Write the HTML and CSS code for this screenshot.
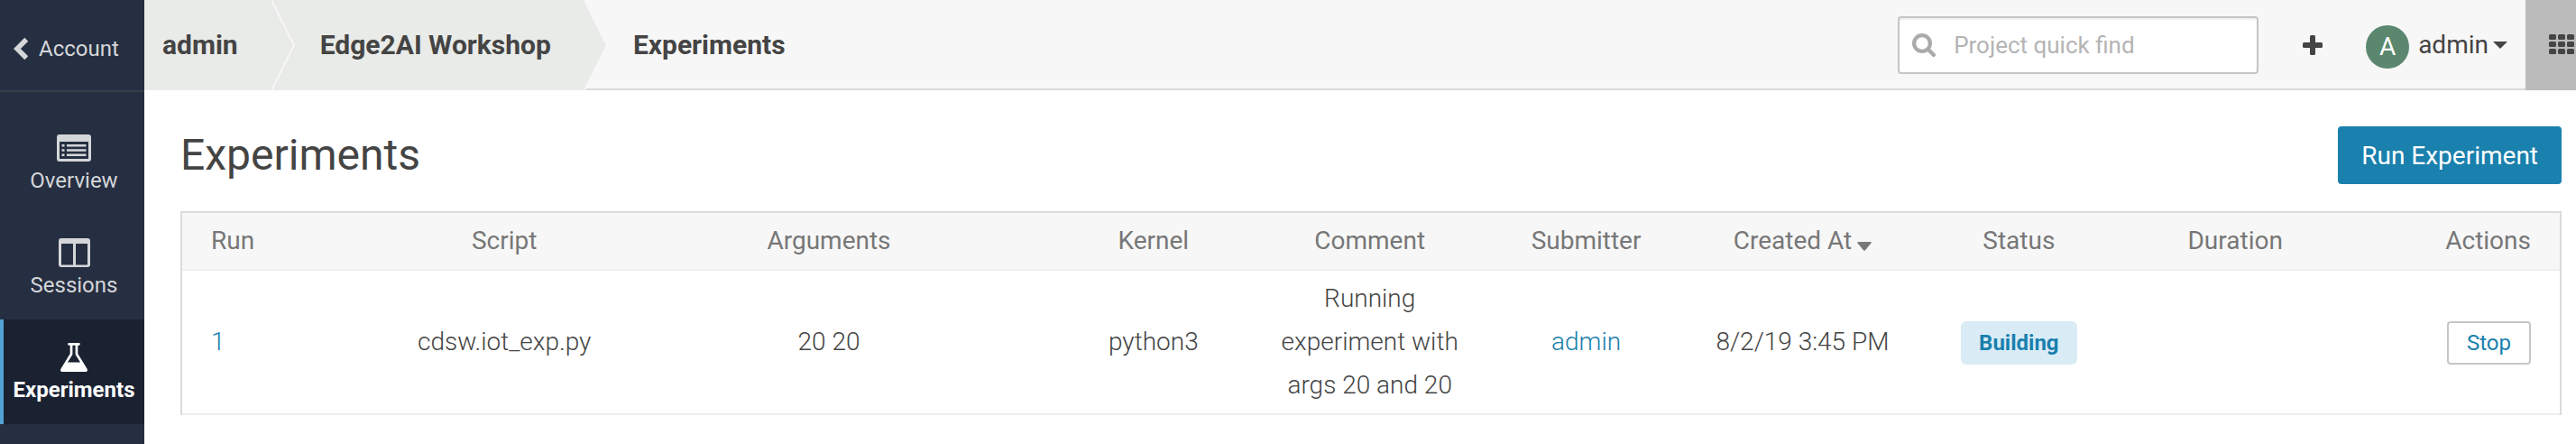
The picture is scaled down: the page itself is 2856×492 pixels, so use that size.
FILE: index.html
```html
<!DOCTYPE html>
<html lang="en">
<head>
<meta charset="utf-8">
<title>Experiments</title>
<link rel="stylesheet" href="styles.css">
</head>
<body>
<div class="app">
  <nav class="sidebar" aria-label="Project">
    <a class="account" href="#">
      <svg width="16" height="26" viewBox="0 0 16 26"><path d="M14.200 2.800 4 13l10.200 10.200" fill="none" stroke="currentColor" stroke-width="5.500"/></svg>
      <span>Account</span>
    </a>
    <div class="nav-list">
      <a class="nav-item" href="#">
        <svg width="38" height="34" viewBox="0 0 38 34"><path fill="currentColor" fill-rule="evenodd" d="M3 2h32a3 3 0 0 1 3 3v24a3 3 0 0 1-3 3H3a3 3 0 0 1-3-3V5a3 3 0 0 1 3-3ZM3 10v18.500a.5.5 0 0 0 .5.5h31a.5.5 0 0 0 .5-.5V10ZM5.500 13h3v2.500h-3ZM5.500 18.200h3v2.500h-3ZM5.500 23.400h3v2.500h-3ZM11 13h21.500v2.500H11ZM11 18.200h21.500v2.500H11ZM11 23.400h21.500v2.500H11Z"/></svg>
        <span>Overview</span>
      </a>
      <a class="nav-item" href="#">
        <svg width="35" height="34" viewBox="0 0 35 34"><path fill="currentColor" fill-rule="evenodd" d="M3 1h29a3 3 0 0 1 3 3v26a3 3 0 0 1-3 3H3a3 3 0 0 1-3-3V4a3 3 0 0 1 3-3ZM3 7v23.500h13V7ZM19 7v23.500h13V7Z"/></svg>
        <span>Sessions</span>
      </a>
      <a class="nav-item active" href="#" aria-current="page">
        <svg width="30" height="34" viewBox="0 0 30 34"><path fill="currentColor" fill-rule="evenodd" d="M9.500 1h11a1.300 1.300 0 0 1 0 2.700h-1.200v9.300l10 16.200c1.300 2.200.6 3.800-1.800 3.800h-25c-2.400 0-3.100-1.600-1.800-3.800l10-16.200V3.700H9.500a1.300 1.300 0 0 1 0-2.700ZM13.400 3.700v10L8 22.500h14l-5.400-8.800v-10Z"/></svg>
        <span>Experiments</span>
      </a>
    </div>
  </nav>
  <div class="page">
    <header class="topbar">
      <nav class="crumbs" aria-label="Breadcrumb">
        <a class="crumb" href="#">admin<svg class="arrow" width="28" height="100" viewBox="0 0 28 100"><path class="fill" d="M0 0 25 50 0 100Z"/><path class="edge" d="M0 0 25 50 0 100"/></svg></a>
        <a class="crumb" href="#">Edge2AI Workshop<svg class="arrow" width="28" height="100" viewBox="0 0 28 100"><path class="fill" d="M0 0 25 50 0 100Z"/><path class="edge" d="M0 0 25 50 0 100"/></svg></a>
        <span class="crumb current">Experiments</span>
      </nav>
      <div class="tools">
        <label class="search">
          <svg width="26" height="26" viewBox="0 0 26 26" fill="none" stroke="currentColor"><circle cx="11" cy="11" r="8.900" stroke-width="4.200"/><path d="m17.500 17.500 6.300 6.300" stroke-width="4.400" stroke-linecap="round"/></svg>
          <input type="text" placeholder="Project quick find" aria-label="Project quick find">
        </label>
        <button class="icon-button" type="button" aria-label="New">
          <svg width="22" height="22" viewBox="0 0 22 22" fill="currentColor"><rect x="8" width="6" height="22" rx="1.500"/><rect y="8" width="22" height="6" rx="1.500"/></svg>
        </button>
        <button class="user" type="button">
          <span class="avatar">A</span>
          <span class="user-name">admin</span>
          <svg class="caret" width="16" height="8" viewBox="0 0 16 8"><path d="M0 0h16L8 8Z" fill="currentColor"/></svg>
        </button>
        <button class="apps" type="button" aria-label="Applications">
          <svg width="28" height="22" viewBox="0 0 28 22" fill="currentColor"><rect width="8" height="6" rx="1.500"/><rect x="10" width="8" height="6" rx="1.500"/><rect x="20" width="8" height="6" rx="1.500"/><rect y="8" width="8" height="6" rx="1.500"/><rect x="10" y="8" width="8" height="6" rx="1.500"/><rect x="20" y="8" width="8" height="6" rx="1.500"/><rect y="16" width="8" height="6" rx="1.500"/><rect x="10" y="16" width="8" height="6" rx="1.500"/><rect x="20" y="16" width="8" height="6" rx="1.500"/></svg>
        </button>
      </div>
    </header>
    <main class="content">
      <div class="heading">
        <h1>Experiments</h1>
        <button class="primary" type="button">Run Experiment</button>
      </div>
      <table class="runs">
        <colgroup>
          <col><col class="col"><col class="col-wide"><col class="col"><col class="col"><col class="col"><col class="col"><col class="col"><col class="col"><col class="col">
        </colgroup>
        <thead>
          <tr>
            <th scope="col">Run</th>
            <th scope="col">Script</th>
            <th scope="col">Arguments</th>
            <th scope="col">Kernel</th>
            <th scope="col">Comment</th>
            <th scope="col">Submitter</th>
            <th scope="col" aria-sort="descending">Created At <svg class="sort" width="16" height="10" viewBox="0 0 16 10"><path d="M1 0h14q1 .5.400 1.500L9 9.300q-1 1-2 0L.6 1.500Q0 .5 1 0Z" fill="currentColor"/></svg></th>
            <th scope="col">Status</th>
            <th scope="col">Duration</th>
            <th scope="col">Actions</th>
          </tr>
        </thead>
        <tbody>
          <tr>
            <td><a href="#">1</a></td>
            <td>cdsw.iot_exp.py</td>
            <td>20 20</td>
            <td>python3</td>
            <td>Running experiment with args 20 and 20</td>
            <td><a href="#">admin</a></td>
            <td>8/2/19 3:45 PM</td>
            <td><span class="badge">Building</span></td>
            <td></td>
            <td><button class="stop" type="button">Stop</button></td>
          </tr>
        </tbody>
      </table>
    </main>
  </div>
</div>
</body>
</html>
```

FILE: styles.css
```css
* {
  box-sizing: border-box;
}

body {
  margin: 0;
  background: #fff;
  color: #444;
  font: 400 28px/48px Roboto, sans-serif;
}

a {
  color: #1a80ad;
  text-decoration: none;
}

button {
  padding: 0;
  border: 0;
  background: none;
  color: inherit;
  font: inherit;
  cursor: pointer;
}

svg {
  flex: none;
}

.app {
  display: flex;
  min-height: 100vh;
}

/* Sidebar */

.sidebar {
  flex: none;
  width: 160px;
  background: #252f41;
  font-size: 24px;
  line-height: 32px;
}

.sidebar a {
  color: #d5d6d9;
}

.account {
  display: flex;
  align-items: center;
  gap: 12px;
  height: 102px;
  padding: 8px 0 0 15px;
  border-bottom: 2px solid #363d48;
}

.nav-list {
  padding-top: 20px;
}

.nav-item {
  display: flex;
  flex-direction: column;
  align-items: center;
  gap: 3px;
  height: 116px;
  padding-top: 25px;
  border-left: 4px solid transparent;
}

.sidebar .active {
  border-left-color: #52a3d3;
  background: #1a2232;
  color: #fff;
  font-weight: 700;
}

/* Top bar */

.page {
  flex: 1;
  min-width: 0;
}

.topbar {
  display: flex;
  justify-content: space-between;
  height: 100px;
  background: #f7f7f7;
  box-shadow: inset 0 -2px #dadada;
}

.crumbs {
  display: flex;
}

.crumb {
  position: relative;
  padding: 0 37px 0 54px;
  background: #e9ebe8;
  color: #444;
  font-size: 30px;
  font-weight: 700;
  line-height: 100px;
}

.crumb:first-child {
  padding-left: 20px;
}

.crumb.current {
  background: none;
}

.arrow {
  position: absolute;
  top: 0;
  left: 100%;
  z-index: 1;
}

.arrow .fill {
  fill: #e9ebe8;
}

.arrow .edge {
  fill: none;
  stroke: #f7f7f7;
  stroke-width: 2;
}

.tools {
  display: flex;
  align-items: center;
}

.search {
  display: flex;
  align-items: center;
  gap: 20px;
  width: 400px;
  height: 64px;
  padding: 0 14px;
  border: 2px solid #c6c6c6;
  border-radius: 4px;
  background: #fff;
  box-shadow: inset 0 2px 2px rgba(0, 0, 0, .07);
  color: #aaa;
}

.search input {
  flex: 1;
  min-width: 0;
  padding: 0;
  border: 0;
  outline: 0;
  background: none;
  color: #444;
  font: inherit;
  font-size: 26px;
}

.search input::placeholder {
  color: #b4b4b4;
  opacity: 1;
}

.icon-button {
  display: flex;
  margin: 0 48px 0 49px;
}

.user {
  display: flex;
  align-items: center;
  margin-right: 20px;
}

.avatar {
  width: 48px;
  height: 48px;
  margin: 4px 10px 0 0;
  border-radius: 50%;
  background: #5b876f;
  color: #fff;
}

.caret {
  margin-left: 5px;
}

.apps {
  display: flex;
  align-items: center;
  align-self: stretch;
  padding: 0 2px 2px 26px;
  background: #bbb;
}

/* Content */

.content {
  padding: 40px 16px 32px 40px;
}

.heading {
  display: flex;
  align-items: center;
  justify-content: space-between;
  margin-bottom: 30px;
}

h1 {
  margin: 0;
  font-size: 48px;
  font-weight: 400;
  line-height: 64px;
}

.primary {
  height: 64px;
  padding: 2px 26px 0;
  border-radius: 4px;
  background: #1a80ad;
  color: #fff;
}

.runs {
  width: 100%;
  table-layout: fixed;
  border-collapse: separate;
  border-spacing: 0;
  border: 2px solid #dadada;
  border-bottom: 0;
}

.col {
  width: 9.1%;
}

.col-wide {
  width: 18.2%;
}

.runs th,
.runs td {
  padding: 7px 16px;
  border-bottom: 2px solid #eee;
  text-align: center;
  font-weight: 300;
}

.runs th {
  background: #f7f7f7;
  color: #777;
  font-weight: 400;
}

.runs tr > :first-child {
  padding-left: 32px;
  text-align: left;
}

.runs tr > :last-child {
  padding-right: 32px;
  text-align: right;
}

.sort {
  margin-left: -1px;
  vertical-align: -2px;
}

.badge,
.stop {
  display: inline-block;
  height: 48px;
  border-radius: 4px;
  color: #1a80ad;
  font-size: 24px;
  line-height: 48px;
  vertical-align: middle;
}

.badge {
  padding: 0 20px;
  border-radius: 6px;
  background: #d9ecf6;
  font-weight: 700;
}

.stop {
  padding: 0 20px;
  border: 2px solid #c6c6c6;
  font-weight: 400;
  line-height: 44px;
}
```
